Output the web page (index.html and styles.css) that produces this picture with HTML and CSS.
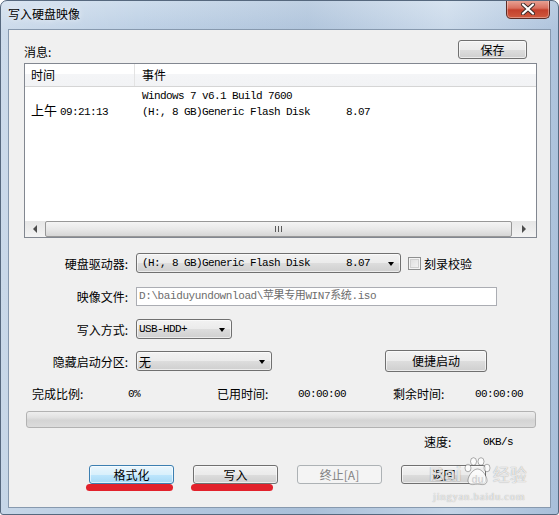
FILE: index.html
```html
<!DOCTYPE html>
<html lang="zh-CN">
<head>
  <meta charset="UTF-8">
  <title>写入硬盘映像</title>
  <link rel="stylesheet" href="styles.css">
</head>
<body>

<div class="window">
  <div class="titlebar">
    <span class="title">写入硬盘映像</span>
    <button class="close">
      <svg width="16" height="12" viewBox="0 0 16 12">
        <path d="M3 1.5 L13 10.5 M13 1.5 L3 10.5" stroke="#3a2a28" stroke-width="4" stroke-linecap="round"/>
        <path d="M3 1.5 L13 10.5 M13 1.5 L3 10.5" stroke="#fff" stroke-width="2.2" stroke-linecap="round"/>
      </svg>
    </button>
  </div>

  <div class="client">
    <div class="msg-head">
      <span>消息:</span>
      <button class="btn save">保存</button>
    </div>

    <div class="listview">
      <div class="lv-head">
        <div class="col-time">时间</div>
        <div class="col-event">事件</div>
      </div>
      <div class="lv-body">
        <div class="lv-row">
          <div class="col-time">上午 <span class="mono">09:21:13</span></div>
          <div class="col-event mono">Windows 7 v6.1 Build 7600
(H:, 8 GB)Generic Flash Disk      8.07</div>
        </div>
      </div>
      <div class="hscroll">
        <div class="sb-arrow"><span class="tri-left"></span></div>
        <div class="sb-thumb"><span class="grip"></span></div>
        <div class="sb-arrow"><span class="tri-right"></span></div>
      </div>
    </div>

    <div class="frow row-drive">
      <span class="flabel">硬盘驱动器:</span>
      <div class="combo combo-drive"><span class="mono">(H:, 8 GB)Generic Flash Disk      8.07</span><span class="arrow"></span></div>
      <span class="check"></span>
      <span class="check-label">刻录校验</span>
    </div>

    <div class="frow row-file">
      <span class="flabel">映像文件:</span>
      <div class="textbox">D:\baiduyundownload\苹果专用WIN7系统.iso</div>
    </div>

    <div class="frow row-mode">
      <span class="flabel">写入方式:</span>
      <div class="combo combo-mode"><span class="mono">USB-HDD+</span><span class="arrow"></span></div>
    </div>

    <div class="frow row-hide">
      <span class="flabel">隐藏启动分区:</span>
      <div class="combo combo-hide"><span>无</span><span class="arrow"></span></div>
      <button class="btn quick">便捷启动</button>
    </div>

    <div class="stats">
      <span>完成比例:</span>
      <span class="mono">0%</span>
      <span>已用时间:</span>
      <span class="mono">00:00:00</span>
      <span>剩余时间:</span>
      <span class="mono">00:00:00</span>
    </div>

    <div class="progress"></div>

    <div class="speed">
      <span>速度:</span>
      <span class="mono">0KB/s</span>
    </div>

    <div class="actions">
      <button class="btn focused marked">格式化</button>
      <button class="btn marked mark-write">写入</button>
      <button class="btn disabled">终止[A]</button>
      <button class="btn">返回</button>
    </div>
  </div>

  <!-- 水印 -->
  <div class="watermark">
    <div class="wm-top">
      <span class="wm-bai">Bai</span>
      <svg class="wm-paw" width="27" height="29" viewBox="0 0 27 29">
        <g fill="rgba(255,255,255,0.75)" stroke="rgba(0,0,0,0.3)" stroke-width="1">
          <ellipse cx="4" cy="11" rx="3" ry="3.8"/>
          <ellipse cx="9.5" cy="4.5" rx="3" ry="3.8"/>
          <ellipse cx="17" cy="4.5" rx="3" ry="3.8"/>
          <ellipse cx="23" cy="11" rx="3" ry="3.8"/>
          <path d="M13.5 12 C9 12 4 19 4 23.5 C4 27 7 28 10 27.5 C12 27 15 27 17 27.5 C20 28 23 27 23 23.5 C23 19 18 12 13.5 12 Z"/>
        </g>
        <text x="13.5" y="25.5" text-anchor="middle" font-family="Liberation Sans, sans-serif" font-weight="bold" font-size="10" fill="rgba(0,0,0,0.12)">du</text>
      </svg>
      <span class="wm-cn">经验</span>
    </div>
    <div class="wm-url">jingyan.baidu.com</div>
  </div>
</div>

</body>
</html>
```

FILE: styles.css
```css
* {
  box-sizing: border-box;
}

body {
  margin: 0;
  background: #fff;
  font-family: "Noto Sans CJK SC", "Liberation Sans", sans-serif;
  font-size: 12px;
  color: #000;
}

.mono {
  font-family: "Liberation Mono", "Noto Sans CJK SC", monospace;
  font-size: 11px;
  letter-spacing: -0.6px;
  white-space: pre;
}

.window {
  position: relative;
  width: 559px;
  height: 515px;
  display: flex;
  flex-direction: column;
  padding: 0 7px 6px 7px;
  border: 1px solid #56687e;
  border-radius: 7px 7px 3px 3px;
  background:
    linear-gradient(90deg, rgba(255,255,255,0.25), rgba(255,255,255,0) 25%, rgba(90,120,160,0.12) 55%, rgba(255,255,255,0.2) 80%, rgba(120,150,190,0.2)),
    linear-gradient(180deg, #cddcec, #bccfe4 30px, #b4c9e0);
  overflow: hidden;
}

.titlebar {
  height: 28px;
  display: flex;
  align-items: center;
}

.title {
  font-size: 12px;
  color: #000;
  margin-top: -3px;
  text-shadow: 0 0 6px rgba(255,255,255,0.9);
}

.close {
  align-self: flex-start;
  margin: -1px 1px 0 auto;
  width: 44px;
  height: 19px;
  padding: 0;
  border: 1px solid #5b2b24;
  border-top: none;
  border-radius: 0 0 5px 5px;
  background: linear-gradient(180deg, #e9a799 0%, #d9705f 45%, #c4402c 55%, #cf5a3f 100%);
  box-shadow: inset 0 0 0 1px rgba(255,255,255,0.35);
  display: flex;
  align-items: center;
  justify-content: center;
}

.client {
  flex: 1;
  background: #f0f0f0;
  border: 1px solid #8799ae;
  padding: 11px 13px 0 15px;
  display: flex;
  flex-direction: column;
}

.msg-head {
  height: 18px;
  display: flex;
  justify-content: space-between;
  align-items: flex-end;
  padding-right: 10px;
}

.msg-head span {
  line-height: 14px;
}

/* buttons */
.btn {
  height: 19px;
  padding: 0;
  border: 1px solid #707070;
  border-radius: 3px;
  background: linear-gradient(180deg, #f2f2f2 0%, #ebebeb 50%, #dddddd 51%, #cfcfcf 100%);
  font-family: "Noto Sans CJK SC", sans-serif;
  font-size: 12px;
  line-height: 16px;
  color: #000;
  box-shadow: inset 0 0 0 1px rgba(255,255,255,0.6);
}

.btn.save {
  width: 69px;
}

.btn.focused {
  border-color: #3c7fb1;
  background: linear-gradient(180deg, #eaf6fd 0%, #d9f0fc 50%, #bee6fd 51%, #a7d9f5 100%);
}

.btn.disabled {
  border-color: #adb2b5;
  background: #f4f4f4;
  color: #838383;
  box-shadow: none;
}

.btn.marked {
  position: relative;
}

.btn.marked::after {
  content: '';
  position: absolute;
  left: -4px;
  right: 0;
  top: 100%;
  margin-top: 1px;
  height: 7px;
  border-radius: 4px;
  background: #e2212b;
}

.btn.mark-write::after {
  left: -3px;
  right: 4px;
}

/* list view */
.listview {
  margin-top: 4px;
  height: 175px;
  border: 1px solid #828790;
  background: #fff;
  display: flex;
  flex-direction: column;
}

.lv-head {
  height: 23px;
  display: flex;
  border-bottom: 1px solid #d5d5d5;
  background: linear-gradient(180deg, #fff 0%, #fff 45%, #f4f5f7 46%, #f2f3f5 100%);
}

.lv-head > div {
  line-height: 22px;
}

.col-time {
  width: 110px;
  padding-left: 6px;
  flex-shrink: 0;
}

.lv-head .col-time {
  border-right: 1px solid #e3e3e3;
}

.col-event {
  padding-left: 7px;
}

.lv-body {
  flex: 1;
  padding-top: 1px;
}

.lv-row {
  display: flex;
  align-items: flex-end;
}

.lv-row .col-time {
  line-height: 16px;
  font-size: 13px;
}

.lv-row .col-time .mono {
  font-size: 11px;
}

.lv-row .col-event {
  line-height: 16px;
  padding-left: 7px;
}

.hscroll {
  height: 16px;
  display: flex;
  background: linear-gradient(180deg, #e6e6e6, #f3f3f3);
}

.sb-arrow {
  width: 20px;
  display: flex;
  align-items: center;
  justify-content: center;
}

.sb-arrow:last-child {
  width: 24px;
}

.tri-left {
  border-right: 4px solid #4d4d4d;
  border-top: 4px solid transparent;
  border-bottom: 4px solid transparent;
}

.tri-right {
  border-left: 4px solid #4d4d4d;
  border-top: 4px solid transparent;
  border-bottom: 4px solid transparent;
}

.sb-thumb {
  flex: 1;
  border: 1px solid #979797;
  border-radius: 2px;
  background: linear-gradient(180deg, #f4f4f4 0%, #e8e8e8 50%, #d6d6d6 100%);
  display: flex;
  align-items: center;
  justify-content: center;
}

.grip {
  width: 7px;
  height: 6px;
  background: repeating-linear-gradient(90deg, #5a5a5a 0 1px, transparent 1px 3px);
}

/* form rows */
.frow {
  display: flex;
  align-items: center;
}

.flabel {
  width: 104px;
  margin-right: 8px;
  text-align: right;
  flex-shrink: 0;
}

.row-drive {
  margin-top: 15px;
}

.row-file {
  margin-top: 14px;
}

.row-mode {
  margin-top: 13px;
}

.row-hide {
  margin-top: 11px;
}

.combo {
  height: 20px;
  display: flex;
  align-items: center;
  justify-content: space-between;
  padding: 0 6px 0 5px;
  border: 1px solid #707070;
  border-radius: 3px;
  background: linear-gradient(180deg, #f2f2f2 0%, #ebebeb 50%, #dddddd 51%, #cfcfcf 100%);
  box-shadow: inset 0 0 0 1px rgba(255,255,255,0.6);
}

.combo-drive {
  width: 265px;
}

.combo-mode {
  width: 96px;
  padding-left: 2px;
}

.combo-hide {
  width: 136px;
  padding-left: 2px;
}

.arrow {
  border-top: 4px solid #000;
  border-left: 3.5px solid transparent;
  border-right: 3.5px solid transparent;
  margin-top: 1px;
}

.check {
  width: 13px;
  height: 13px;
  margin-left: 7px;
  border: 1px solid #8e8f8f;
  background: linear-gradient(135deg, #dcdcdc, #f6f6f6);
  box-shadow: inset 0 0 0 1px #f4f4f4, inset 0 0 0 2px #d0d0d0;
}

.check-label {
  margin-left: 3px;
}

.textbox {
  width: 361px;
  height: 19px;
  padding-left: 2px;
  border: 1px solid #abadb3;
  background: #fff;
  color: #6d6d6d;
  font-family: "Liberation Mono", "Noto Sans CJK SC", monospace;
  font-size: 11px;
  letter-spacing: -0.4px;
  line-height: 17px;
  white-space: nowrap;
  overflow: hidden;
}

.btn.quick {
  width: 102px;
  height: 22px;
  margin-left: 113px;
  align-self: flex-start;
}

/* progress */
.stats {
  margin-top: 14px;
  padding-left: 8px;
  display: grid;
  grid-template-columns: 96px 89px 81px 95px 82px auto;
  line-height: 16px;
}

.progress {
  margin: 9px 1px 0 2px;
  height: 17px;
  border: 1px solid #b2b2b2;
  border-radius: 3px;
  background: linear-gradient(180deg, #eeeeee 0%, #e2e2e2 35%, #d4d4d4 55%, #dcdcdc 100%);
}

.speed {
  margin-top: 6px;
  padding-left: 400px;
  display: grid;
  grid-template-columns: 59px auto;
  line-height: 16px;
}

.actions {
  margin-top: 15px;
  padding-left: 65px;
  display: flex;
  gap: 19px;
}

.actions .btn {
  width: 85px;
}

/* watermark */
.watermark {
  position: absolute;
  left: 428px;
  top: 455px;
  color: rgba(255,255,255,0.75);
  text-shadow: 0 0 1px rgba(0,0,0,0.4);
  pointer-events: none;
}

.wm-top {
  display: flex;
  align-items: flex-end;
  height: 32px;
}

.wm-bai {
  font-family: "Liberation Sans", sans-serif;
  font-weight: bold;
  font-size: 21px;
  line-height: 24px;
  margin-bottom: 2px;
}

.wm-paw {
  margin: 0 0 2px 2px;
}

.wm-cn {
  margin: 0 0 4px 2px;
  font-family: "Noto Sans CJK SC", sans-serif;
  font-size: 17px;
  line-height: 20px;
}

.wm-url {
  margin-top: 2px;
  padding-left: 4px;
  font-family: "Liberation Serif", serif;
  font-size: 11px;
  line-height: 12px;
  letter-spacing: 0.6px;
}
```
